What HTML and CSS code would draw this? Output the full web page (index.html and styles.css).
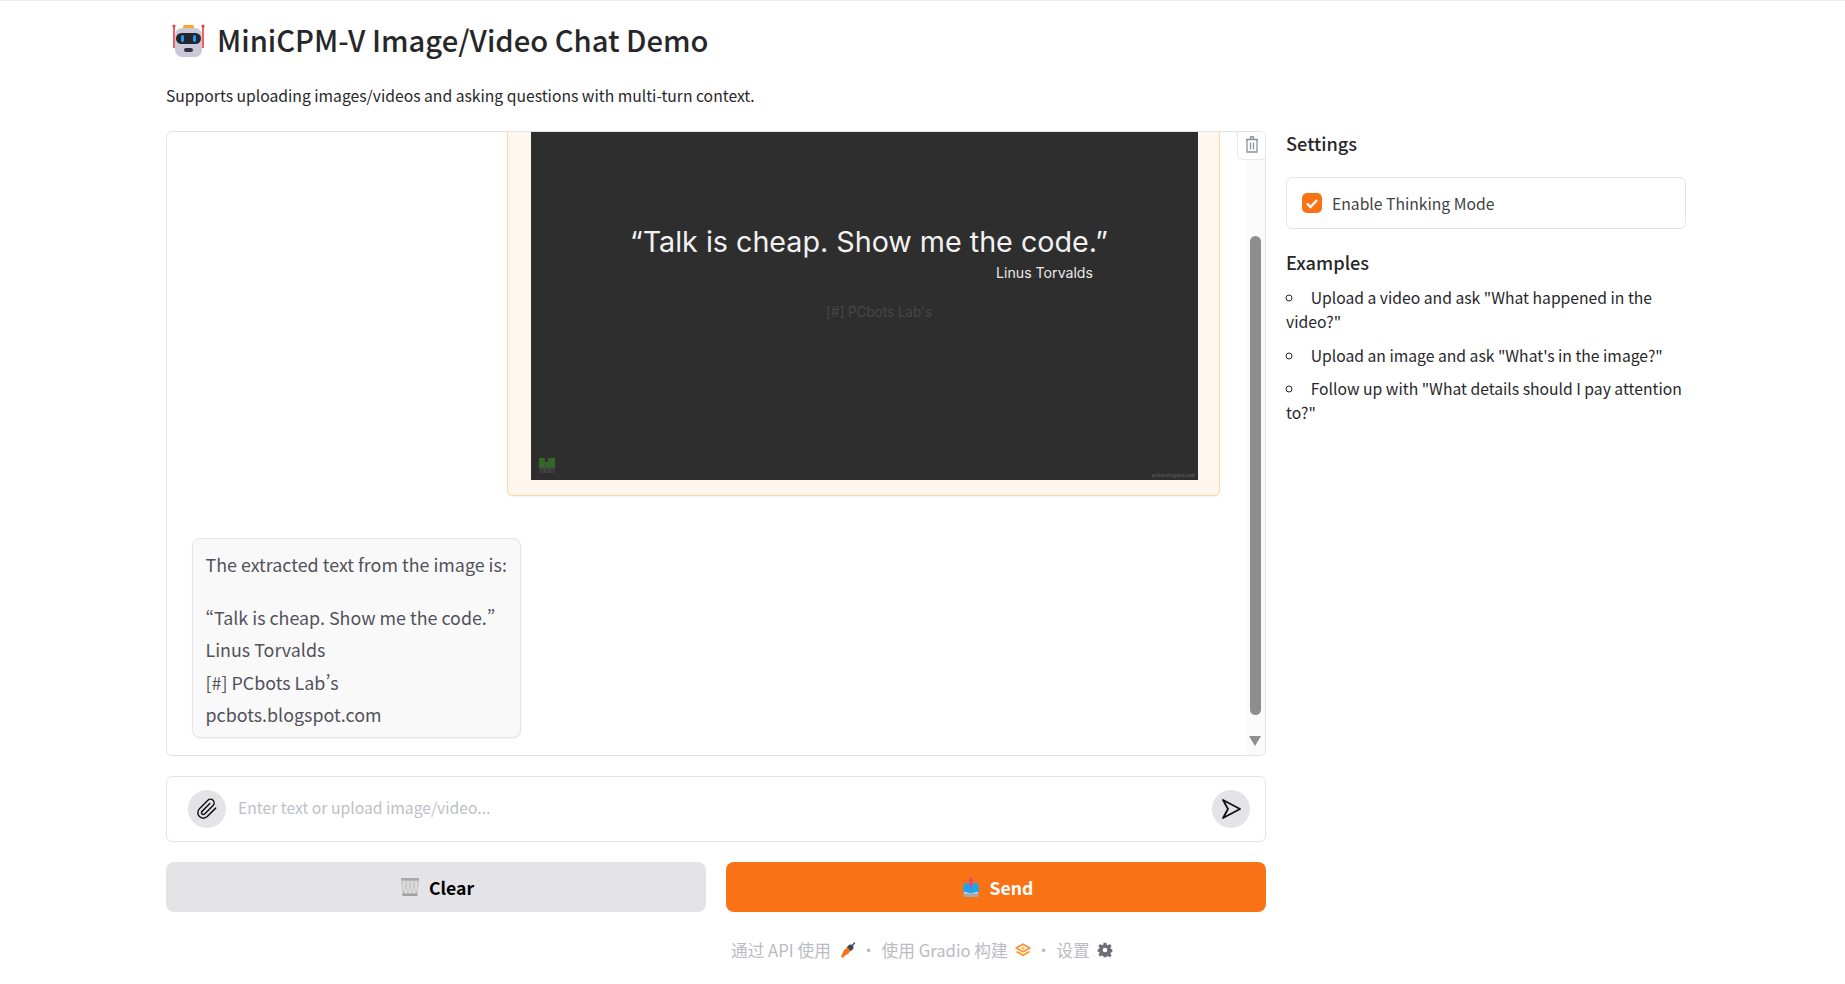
FILE: index.html
```html
<!DOCTYPE html>
<html lang="en">
<head>
<meta charset="utf-8">
<title>MiniCPM-V Image/Video Chat Demo</title>
<link rel="stylesheet" href="styles.css">
</head>
<body>
<div class="app">
  <header class="head">
    <h1 class="title">
      <svg class="robot" viewBox="0 0 35 33" aria-hidden="true">
        <rect x="12" y="1" width="11" height="4" rx="1.5" fill="#f9a825"/>
        <path d="M3 2v22M32 2v22" stroke="#ef3b3b" stroke-width="1.6"/>
        <circle cx="3" cy="2" r="1.6" fill="#ef3b3b"/><circle cx="32" cy="2" r="1.6" fill="#ef3b3b"/>
        <rect x="4" y="4" width="27" height="29" rx="7" fill="#cdc8d8"/>
        <rect x="5" y="9" width="25" height="11" rx="5.5" fill="#23262e"/>
        <rect x="10" y="11" width="3" height="7" rx="1.5" fill="#1e9bf0"/>
        <rect x="22" y="11" width="3" height="7" rx="1.5" fill="#1e9bf0"/>
        <rect x="13" y="24" width="9" height="4" rx="2" fill="#33363e"/>
      </svg>
      <span>MiniCPM-V Image/Video Chat Demo</span>
    </h1>
    <p class="subtitle">Supports uploading images/videos and asking questions with multi-turn context.</p>
  </header>

  <div class="columns">
    <main class="main">
      <section class="chat">
        <div class="messages">
          <div class="bubble-user">
            <svg class="picture" viewBox="0 0 667 500" role="img">
              <rect width="667" height="500" fill="#2e2e2e"/>
              <text class="pic-quote" x="99" y="272" textLength="478" lengthAdjust="spacingAndGlyphs">“Talk is cheap. Show me the code.”</text>
              <text class="pic-name" x="465" y="298" textLength="97" lengthAdjust="spacingAndGlyphs">Linus Torvalds</text>
              <text class="pic-lab" x="295" y="337" textLength="106" lengthAdjust="spacingAndGlyphs">[#] PCbots Lab's</text>
              <text class="pic-url" x="621" y="497" textLength="43" lengthAdjust="spacingAndGlyphs">pcbots.blogspot.com</text>
              <g>
                <rect x="8" y="478" width="16" height="10" fill="#2f6b22"/>
                <rect x="13" y="478" width="4" height="4" fill="#2e2e2e"/>
                <rect x="8" y="488" width="16" height="5" fill="#3a3a3a"/>
                <path d="M13.5 478v15M18.5 478v15M8 488h16" stroke="#4a4a4a" stroke-width="1" fill="none"/>
              </g>
            </svg>
          </div>
          <div class="bubble-bot">
            <p class="bot-line bot-first">The extracted text from the image is:</p>
            <p class="bot-line">“Talk is cheap. Show me the code.”</p>
            <p class="bot-line">Linus Torvalds</p>
            <p class="bot-line">[#] PCbots Lab’s</p>
            <p class="bot-line">pcbots.blogspot.com</p>
          </div>
        </div>
        <div class="rail">
          <div class="rail-clear">
            <svg class="icon-trash" viewBox="0 0 14 17" aria-hidden="true">
              <path d="M1 3.500h12M5.500 3V1h3v2M2 3.500V16h10V3.500M5.500 6.500v7M8.500 6.500v7" fill="none" stroke="#8b8f98" stroke-width="1.300"/>
            </svg>
          </div>
          <div class="thumb"></div>
          <div class="arrow"></div>
        </div>
      </section>

      <section class="composer">
        <span class="round-btn">
          <svg class="icon-clip" viewBox="0 0 24 24" aria-hidden="true">
            <path d="M21.44 11.05l-9.19 9.19a6 6 0 0 1-8.49-8.49l9.19-9.19a4 4 0 0 1 5.66 5.66l-9.2 9.19a2 2 0 0 1-2.83-2.83l8.49-8.48" fill="none" stroke="#111" stroke-width="1.6" stroke-linecap="round" stroke-linejoin="round"/>
          </svg>
        </span>
        <span class="placeholder">Enter text or upload image/video...</span>
        <span class="round-btn">
          <svg class="icon-send" viewBox="0 0 20 20" aria-hidden="true">
            <path d="M2 1l17 9-17 9 5-9z" fill="none" stroke="#111" stroke-width="1.8" stroke-linejoin="round"/>
          </svg>
        </span>
      </section>

      <section class="actions">
        <button class="btn btn-clear" type="button">
          <svg class="btn-icon" viewBox="0 0 20 20" aria-hidden="true">
            <path d="M1 1h18v2.500l-1.500 14H2.500L1 3.500z" fill="#c6c6c6"/>
            <path d="M3 4l3 13M7 4l3 13M11 4l3 13M15 4l2 9M17 4l-3 13M13 4l-3 13M9 4L6 17M5 4L3 13" stroke="#e9e9e9" stroke-width=".8"/>
            <rect x="1" y="1" width="18" height="2.500" fill="#a8a8a8"/>
            <rect x="2.500" y="16.500" width="15" height="2.500" fill="#a0a0a0"/>
          </svg>
          <span>Clear</span>
        </button>
        <button class="btn btn-send" type="button">
          <svg class="btn-icon" viewBox="0 0 20 21" aria-hidden="true">
            <rect x="2" y="6.500" width="16" height="11" rx="2" fill="#18a5ee"/>
            <path d="M2 16.500h16v3a1.500 1.500 0 0 1-1.500 1.500h-13A1.500 1.500 0 0 1 2 19.500z" fill="#a9a9a9"/>
            <path d="M3 15.500q7 3 14 0v1.500H3z" fill="#e8f6fd"/>
            <path d="M10 0l3 4.500h-1.700V11H8.700V4.500H7z" fill="#f43f6e"/>
          </svg>
          <span>Send</span>
        </button>
      </section>
    </main>

    <aside class="side">
      <h2 class="side-title">Settings</h2>
      <label class="check-card">
        <span class="checkbox">
          <svg class="icon-check" viewBox="0 0 20 20" aria-hidden="true">
            <path d="M5 10.500l3.500 3.500L15 7" fill="none" stroke="#fff" stroke-width="2.300"/>
          </svg>
        </span>
        <span class="check-label">Enable Thinking Mode</span>
      </label>
      <h2 class="side-title examples-title">Examples</h2>
      <ul class="examples">
        <li><span class="item-text">Upload a video and ask "What happened in the video?"</span></li>
        <li><span class="item-text">Upload an image and ask "What's in the image?"</span></li>
        <li><span class="item-text">Follow up with "What details should I pay attention to?"</span></li>
      </ul>
    </aside>
  </div>

  <footer class="footer">
    <span>通过 API 使用</span>
    <svg class="foot-icon rocket" viewBox="0 0 16 16" aria-hidden="true">
      <path d="M11 5l3.500-4" stroke="#3f4755" stroke-width="1.400" stroke-linecap="round"/>
      <ellipse cx="10" cy="6" rx="3.600" ry="3" transform="rotate(-45 10 6)" fill="#3f4755"/>
      <path d="M7.500 5.500l3 3-2.500 3.500-3 1.500-2.500 2.500-1.500-1.500 1.500-3 1.500-3.500z" fill="#f97316"/>
    </svg>
    <span class="dot">·</span>
    <span>使用 Gradio 构建</span>
    <svg class="foot-icon" viewBox="0 0 16 14" aria-hidden="true">
      <path d="M8 1.200L14.800 5 8 8.800 1.200 5z" fill="none" stroke="#fb923c" stroke-width="1.800" stroke-linejoin="round"/>
      <path d="M1.500 8.500L8 12.300l6.500-3.800" fill="none" stroke="#f59e0b" stroke-width="1.800"/>
      <circle cx="8" cy="5" r="1.500" fill="#fbbf24"/>
    </svg>
    <span class="dot dot-second">·</span>
    <span>设置</span>
    <svg class="foot-icon" viewBox="0 0 24 24" aria-hidden="true">
      <path fill="#6b6f76" fill-rule="evenodd" d="M10 1h4l.6 3.100 1.900.8L19.100 3.100l2.800 2.800-1.800 2.600.8 1.900L23 11v4l-2.100.6-.8 1.900 1.800 2.600-2.800 2.800-2.600-1.800-1.900.8L14 23h-4l-.6-2.100-1.900-.8-2.600 1.800-2.800-2.800 1.800-2.600-.8-1.900L1 15v-4l2.100-.5.800-1.900L2.100 5.900l2.800-2.800 2.600 1.800 1.900-.8zM12 8.500a3.500 3.500 0 1 0 0 7 3.500 3.500 0 0 0 0-7z"/>
    </svg>
  </footer>
</div>
</body>
</html>
```

FILE: styles.css
```css
* { box-sizing: border-box; }
html, body { margin: 0; padding: 0; height: 100%; }
body {
  background: #fff;
  color: #27272a;
  font-family: "Noto Sans CJK SC", "Noto Sans", sans-serif;
  font-feature-settings: "pwid";
  overflow: hidden;
  border-top: 1px solid #eeeeee;
}
.app { width: 1520px; margin-left: 166px; }

.head { height: 130px; }
.title {
  margin: 0 0 0 5px;
  height: 81px;
  padding-top: 23px;
  display: flex;
  align-items: flex-start;
  gap: 11px;
  font-size: 29.2px;
  line-height: 31px;
  font-weight: 500;
  color: #27272a;
}
.robot { width: 35px; height: 33px; flex: none; }
.subtitle { margin: 0; font-size: 15.7px; line-height: 28px; color: #27272a; }

.columns { display: grid; grid-template-columns: 1100px 400px; column-gap: 20px; }
.main { display: flex; flex-direction: column; }

.chat {
  height: 625px;
  display: flex;
  border: 1px solid #e4e4e7;
  border-radius: 6px;
  overflow: hidden;
}
.messages {
  flex: 1;
  min-width: 0;
  display: flex;
  flex-direction: column;
  justify-content: flex-end;
  padding: 0 26px 17px 25px;
}
.bubble-user {
  flex: none;
  align-self: flex-end;
  width: 713px;
  padding: 0 22px 15px 23px;
  background: #fff6ed;
  border: 1px solid #fed7aa;
  border-top: 0;
  border-radius: 0 0 6px 6px;
  box-shadow: 0 1px 2px rgba(0, 0, 0, .05);
  margin-bottom: 42px;
}
.picture { display: block; width: 667px; height: 500px; }
.pic-quote { font-family: "Inter", sans-serif; font-size: 28px; font-weight: 400; fill: #f2f2f2; }
.pic-name { font-family: "Inter", sans-serif; font-size: 14px; fill: #e8e8e8; }
.pic-lab { font-family: "Inter", sans-serif; font-size: 14px; fill: #474747; }
.pic-url { font-family: "Liberation Serif", serif; font-size: 5.5px; fill: #6a6a6a; }

.bubble-bot {
  flex: none;
  align-self: flex-start;
  width: 329px;
  padding: 9.5px 12px 6.5px 12.5px;
  background: #f9f9fa;
  border: 1px solid #e4e4e7;
  border-radius: 8px;
  box-shadow: 0 1px 2px rgba(0, 0, 0, .05);
}
.bot-line { margin: 0; font-size: 17.87px; line-height: 32.4px; color: #52525b; white-space: nowrap; }
.bot-first { margin-bottom: 20px; }

.rail {
  flex: none;
  width: 19px;
  position: relative;
  background: #fafafa;
}
.rail-clear {
  position: absolute;
  top: 0;
  right: 0;
  width: 28px;
  height: 28px;
  padding-bottom: 2px;
  background: #fff;
  border-left: 1px solid #e8e8ea;
  border-bottom: 1px solid #e8e8ea;
  border-bottom-left-radius: 6px;
  display: flex;
  align-items: center;
  justify-content: center;
}
.icon-trash { width: 14px; height: 17px; }
.thumb {
  position: absolute;
  left: 4px;
  top: 104px;
  width: 11px;
  height: 479px;
  border-radius: 6px;
  background: #8d8d8d;
}
.arrow {
  position: absolute;
  left: 3px;
  top: 604px;
  width: 0;
  height: 0;
  border-left: 6.5px solid transparent;
  border-right: 6.5px solid transparent;
  border-top: 10px solid #8d8d8d;
}

.composer {
  margin-top: 20px;
  height: 66px;
  display: flex;
  align-items: center;
  gap: 12px;
  padding: 0 15px 0 21px;
  border: 1px solid #e4e4e7;
  border-radius: 6px;
}
.round-btn {
  flex: none;
  width: 38px;
  height: 38px;
  border-radius: 50%;
  background: #e4e4e7;
  display: flex;
  align-items: center;
  justify-content: center;
}
.icon-clip { width: 22px; height: 22px; }
.icon-send { width: 20px; height: 20px; }
.placeholder { flex: 1; font-size: 15.7px; color: #bdbfc6; padding-bottom: 3px; }

.actions { margin-top: 20px; display: grid; grid-template-columns: 1fr 1fr; column-gap: 20px; }
.btn {
  height: 50px;
  border: 0;
  border-radius: 8px;
  padding: 0 0 0 2px;
  display: flex;
  align-items: center;
  justify-content: center;
  gap: 9px;
  font-family: inherit;
  font-feature-settings: inherit;
  font-size: 17.6px;
  font-weight: 700;
}
.btn-clear { background: #e4e4e7; color: #000; }
.btn-send { background: #f97316; color: #fff; }
.btn-icon { width: 20px; height: 20px; }

.side { display: block; }
.side-title { margin: 0; font-size: 18.2px; line-height: 25px; font-weight: 500; color: #27272a; }
.check-card {
  margin-top: 21px;
  height: 52px;
  display: flex;
  align-items: center;
  gap: 10px;
  padding: 0 15px;
  border: 1px solid #e4e4e7;
  border-radius: 6px;
}
.checkbox { width: 20px; height: 20px; border-radius: 5px; background: #f97316; flex: none; display: flex; }
.icon-check { width: 20px; height: 20px; }
.check-label { font-size: 15.7px; color: #3f3f46; }
.examples-title { margin-top: 21px; }
.examples {
  margin: 11px 0 0 0;
  padding: 0;
  list-style: circle inside;
  font-size: 15.7px;
  line-height: 24px;
  color: #27272a;
}
.examples li { margin-bottom: 9.5px; }
.item-text { margin-left: 2px; }

.footer {
  margin-top: 24.5px;
  margin-left: 565px;
  height: 26px;
  display: flex;
  align-items: center;
  font-size: 16.7px;
  color: #b9bcc3;
  white-space: nowrap;
}
.foot-icon { width: 16px; height: 16px; flex: none; margin-left: 7px; }
.rocket { margin-left: 9px; }
.dot { margin: 0 4.5px; }
```
